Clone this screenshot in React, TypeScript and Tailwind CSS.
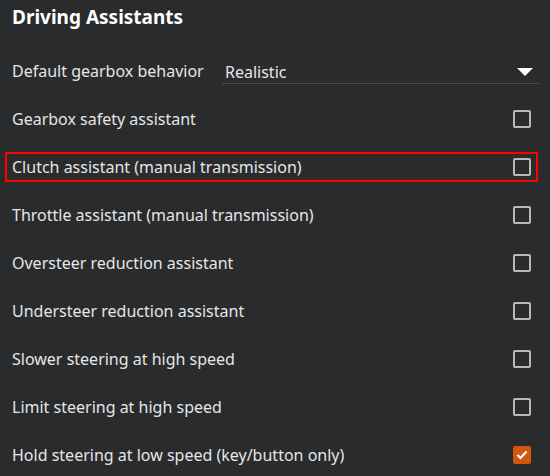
const options = [
  { label: "Gearbox safety assistant", checked: false },
  { label: "Clutch assistant (manual transmission)", checked: false, focused: true },
  { label: "Throttle assistant (manual transmission)", checked: false },
  { label: "Oversteer reduction assistant", checked: false },
  { label: "Understeer reduction assistant", checked: false },
  { label: "Slower steering at high speed", checked: false },
  { label: "Limit steering at high speed", checked: false },
  { label: "Hold steering at low speed (key/button only)", checked: true },
];

export default function App() {
  return (
    <div
      className="h-[476px] w-[550px] overflow-hidden bg-[#2a2b2c] pl-[5px] pr-[12px] text-[16px] text-[#e6e6e6]"
      style={{ fontFamily: '"Noto Sans", "Open Sans", sans-serif' }}
    >
      {/* Title */}
      <div className="h-[47px] pl-[7px] pt-[4px] text-[19px] font-bold leading-[27px] text-white">
        Driving Assistants
      </div>

      {/* Gearbox select */}
      <div className="flex h-12 items-center">
        <div className="flex h-[30px] w-full items-center border-2 border-transparent px-[5px]">
          <span>Default gearbox behavior</span>
          <div className="ml-auto mr-[-8px] flex h-[26px] w-[317px] items-center border-b border-[#4a4b4c] pl-[3px] pr-[6px] pt-[2px]">
            <span>Realistic</span>
            <svg className="ml-auto" width="16" height="8" viewBox="0 0 16 8">
              <path d="M0 0 H16 L8 8 Z" fill="#ffffff" />
            </svg>
          </div>
        </div>
      </div>

      {/* Checkbox rows */}
      {options.map((o) => (
        <div key={o.label} className="flex h-12 items-center">
          <div
            className={
              o.focused
                ? "flex h-[30px] w-full items-center border-2 border-[#ff0000] px-[5px]"
                : "flex h-[30px] w-full items-center border-2 border-transparent px-[5px]"
            }
          >
            <span>{o.label}</span>
            {o.checked ? (
              <span className="ml-auto flex h-[18px] w-[18px] items-center justify-center rounded-[2px] bg-[#d1560e]">
                <svg width="12" height="10" viewBox="0 0 12 10">
                  <path d="M1.5 5 L4.5 8 L10.5 1.5" fill="none" stroke="#ffffff" strokeWidth="2.2" />
                </svg>
              </span>
            ) : (
              <span className="ml-auto h-[18px] w-[18px] rounded-[2px] border-2 border-[#b9b9b9]" />
            )}
          </div>
        </div>
      ))}
    </div>
  );
}
